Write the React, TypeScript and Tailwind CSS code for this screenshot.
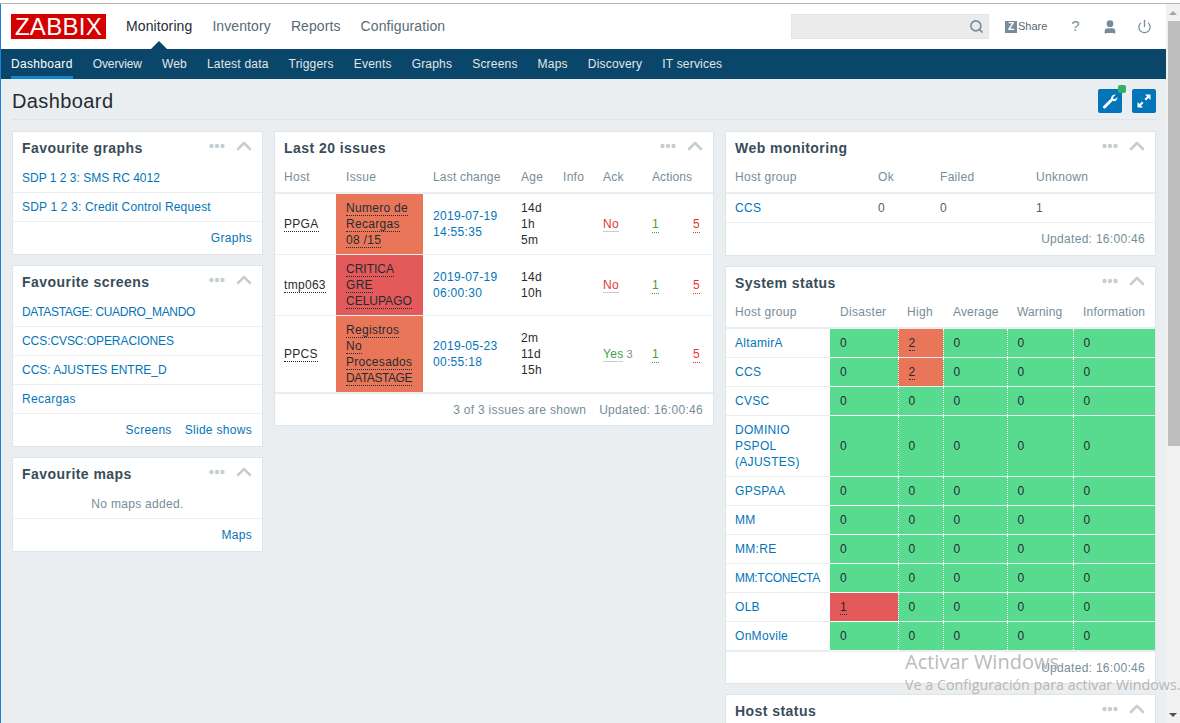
import React from "react";
import { Search, User, Power, ChevronUp } from "lucide-react";

const Link = "text-[#0275b8]";

function Head({ title }: { title: string }) {
  return (
    <div className="flex h-[31px] items-center pl-[9px] pr-[11px]">
      <div className="flex-1 pt-[2px] text-[14px] font-bold tracking-[0.45px] text-[#3a4c59]">{title}</div>
      <svg width="16" height="6" viewBox="0 0 16 6" className="mr-[12px] mb-[3px]">
        <circle cx="2.5" cy="3" r="2.2" fill="#c5ced3" />
        <circle cx="8" cy="3" r="2.2" fill="#c5ced3" />
        <circle cx="13.5" cy="3" r="2.2" fill="#c5ced3" />
      </svg>
      <ChevronUp size={24} strokeWidth={2.6} className="mb-[3px] -mx-[5px] text-[#c5ced3]" />
    </div>
  );
}

function Widget({ title, children, className = "" }: { title: string; children?: React.ReactNode; className?: string }) {
  return (
    <div className={`border border-[#dfe4e7] bg-white ${className}`}>
      <Head title={title} />
      {children}
    </div>
  );
}

function Foot({ children, short }: { children: React.ReactNode; short?: boolean }) {
  return <div className={`flex ${short ? "h-[32px]" : "h-[33px]"} items-center justify-end gap-[13px] border-t border-[#ebeef0] pr-[10px] text-[#768d99]`}>{children}</div>;
}

function ListRows({ items }: { items: [string, string][] }) {
  return (
    <div>
      {items.map(([t, track], i) => (
        <div key={t} className={`flex h-[29px] items-center px-[9px] ${Link} ${track} ${i ? "border-t border-[#ebeef0]" : ""}`}>{t}</div>
      ))}
    </div>
  );
}

function Dot({ children, className = "" }: { children: React.ReactNode; className?: string }) {
  return <span className={`border-b border-dotted border-current ${className}`}>{children}</span>;
}

const th = "h-[30px] pb-[2px] text-left align-middle font-normal text-[#768d99]";

function Issues() {
  const rows = [
    { host: "PPGA", color: "bg-[#e97659]", issue: [["Numero de", ""], ["Recargas", ""], ["08 /15", ""]], date: "2019-07-19", time: "14:55:35", age: ["14d", "1h", "5m"], ack: false },
    { host: "tmp063", color: "bg-[#e45959]", issue: [["CRITICA", "tracking-normal"], ["GRE", ""], ["CELUPAGO", "tracking-normal"]], date: "2019-07-19", time: "06:00:30", age: ["14d", "10h"], ack: false },
    { host: "PPCS", color: "bg-[#e97659]", issue: [["Registros", ""], ["No", ""], ["Procesados", ""], ["DATASTAGE", "tracking-[-0.45px]"]], date: "2019-05-23", time: "00:55:18", age: ["2m", "11d", "15h"], ack: true },
  ];
  return (
    <table className="w-full table-fixed border-collapse">
      <colgroup>
        <col className="w-[61px]" /><col className="w-[87px]" /><col className="w-[88px]" /><col className="w-[41px]" /><col className="w-[41px]" /><col className="w-[49px]" /><col />
      </colgroup>
      <thead>
        <tr className="border-b-2 border-[#ebeef0]">
          <th className={`${th} pl-[9px]`}>Host</th>
          <th className={`${th} pl-[10px]`}>Issue</th>
          <th className={`${th} pl-[10px] tracking-[0.2px]`}>Last change</th>
          <th className={`${th} pl-[10px]`}>Age</th>
          <th className={`${th} pl-[11px]`}>Info</th>
          <th className={`${th} pl-[10px]`}>Ack</th>
          <th className={`${th} pl-[10px] tracking-[0.1px]`}>Actions</th>
        </tr>
      </thead>
      <tbody className="leading-[16px]">
        {rows.map((r) => (
          <tr key={r.host} className="border-b border-[#ebeef0]">
            <td className="pl-[9px] text-[#1f2c33]"><Dot>{r.host}</Dot></td>
            <td className={`${r.color} py-[6px] pl-[10px] text-[#1f2c33]`}>
              {r.issue.map(([l, track]) => <div key={l}><Dot className={track}>{l}</Dot></div>)}
            </td>
            <td className={`pl-[10px] ${Link}`}><div>{r.date}</div><div>{r.time}</div></td>
            <td className="pl-[10px] text-[#1f2c33]">{r.age.map((a) => <div key={a}>{a}</div>)}</td>
            <td />
            <td className="pl-[10px] whitespace-nowrap">
              {r.ack ? (
                <><span className="border-b border-[#c5ced3] text-[#429e47]">Yes</span><span className="ml-[3px] text-[11px] text-[#768d99]">3</span></>
              ) : (
                <span className="border-b border-[#c5ced3] text-[#e33734]">No</span>
              )}
            </td>
            <td className="pl-[10px] pr-[13px]">
              <div className="flex justify-between">
                <Dot className="text-[#429e47]">1</Dot>
                <Dot className="text-[#e33734]">5</Dot>
              </div>
            </td>
          </tr>
        ))}
      </tbody>
    </table>
  );
}

function SystemStatus() {
  const names: [string, number?, number?][] = [
    ["AltamirA", 0, 2], ["CCS", 0, 2], ["CVSC"], ["DOMINIO PSPOL (AJUSTES)"], ["GPSPAA"], ["MM"], ["MM:RE"], ["MM:TCONECTA"], ["OLB", 1, 0], ["OnMovile"],
  ];
  const h = "h-[30px] pb-[1px] text-left align-middle font-normal text-[#768d99]";
  return (
    <table className="w-full table-fixed border-collapse">
      <colgroup>
        <col className="w-[104px]" /><col className="w-[68px]" /><col className="w-[45px]" /><col className="w-[64px]" /><col className="w-[66px]" /><col />
      </colgroup>
      <thead>
        <tr className="border-b-2 border-[#ebeef0]">
          <th className={`${h} pl-[9px]`}>Host group</th>
          <th className={`${h} pl-[10px]`}>Disaster</th>
          <th className={`${h} pl-[9px]`}>High</th>
          <th className={`${h} pl-[10px] tracking-[0.15px]`}>Average</th>
          <th className={`${h} pl-[10px] tracking-[0.15px]`}>Warning</th>
          <th className={`${h} pl-[10px] tracking-[0.2px]`}>Information</th>
        </tr>
      </thead>
      <tbody className="leading-[16px]">
        {names.map(([n, d = 0, high = 0]) => (
          <tr key={n} className="border-b border-[#ebeef0]">
            <td className={`py-[6px] pl-[9px] pr-[4px] ${Link} whitespace-normal`}>{n === "MM:TCONECTA" ? <span className="whitespace-nowrap tracking-[-0.32px]">{n}</span> : n}</td>
            <Cell v={d} hot="bg-[#e45959]" first />
            <Cell v={high} hot="bg-[#e97659]" />
            <Cell v={0} />
            <Cell v={0} />
            <Cell v={0} />
          </tr>
        ))}
      </tbody>
    </table>
  );
}

function Cell({ v, hot, first }: { v: number; hot?: string; first?: boolean }) {
  return (
    <td className={`h-[29px] border-b border-b-white pl-[10px] text-[#1f2c33] ${v ? hot : "bg-[#59db8f]"} ${first ? "" : "border-l border-dotted border-l-white"}`}>
      {v ? <Dot>{v}</Dot> : v}
    </td>
  );
}

export default function App() {
  return (
    <div className="relative h-[723px] w-[1180px] overflow-hidden bg-white text-[12px] tracking-[0.3px] [font-family:'Liberation_Sans',Arial,sans-serif]">
      <div className="h-[3px] bg-white" />
      <div className="h-px bg-[#b5b5b5]" />
      <div className="flex h-[719px]">
        <div className="w-px shrink-0 bg-[#1883d7]" />
        <main className="w-[1165px] shrink-0 overflow-hidden bg-[#ebeef0]">
          <header className="flex h-[45px] items-center bg-white pl-[10px] pr-[14px]">
            <div className="flex h-[25px] w-[95px] items-center justify-center bg-[#d40000] text-[24px] leading-none tracking-[0.3px] text-white">ZABBIX</div>
            <nav className="ml-[20px] flex gap-[20px] text-[14px] tracking-[0.1px] text-[#5a6a74]">
              <span className="text-[#1f2c33]">Monitoring</span>
              <span>Inventory</span>
              <span>Reports</span>
              <span>Configuration</span>
            </nav>
            <div className="ml-auto flex h-[25px] w-[198px] items-center justify-end border border-[#e3e4e4] bg-[#ebebeb] pr-[4px]">
              <Search size={15} strokeWidth={2.5} className="text-[#768d99]" />
            </div>
            <div className="ml-[16px] flex items-center">
              <span className="flex h-[12px] w-[12px] items-center justify-center bg-[#768d99] text-[10px] font-bold leading-none tracking-normal text-white">Z</span>
              <span className="ml-px text-[11px] tracking-normal text-[#5a6a74]">Share</span>
            </div>
            <span className="ml-[24px] text-[15px] text-[#768d99]">?</span>
            <User size={16} fill="#768d99" className="ml-[22px] text-[#768d99]" />
            <Power size={15} strokeWidth={2} className="ml-[19px] text-[#768d99]" />
          </header>
          <div className="relative flex h-[30px] items-stretch gap-[20px] bg-[#0a466a] pl-[10px] tracking-[0.2px] text-[#e1e6e9]">
            <span className="absolute -top-[8px] left-[150px] h-0 w-0 border-x-[8px] border-b-[8px] border-x-transparent border-b-[#0a466a]" />
            {["Dashboard", "Overview", "Web", "Latest data", "Triggers", "Events", "Graphs", "Screens", "Maps", "Discovery", "IT services"].map((t, i) => (
              <span key={t} className={`flex items-center border-b-[3px] pt-[3px] ${i === 0 ? "border-[#0e87cf] tracking-[0.33px] text-white" : i === 1 ? "border-transparent tracking-[-0.1px]" : "border-transparent"}`}>{t}</span>
            ))}
          </div>
          <div className="ml-[11px] mr-[10px] flex h-[41px] items-center border-b border-[#dfe4e7]">
            <h1 className="flex-1 pt-[3px] text-[20px] tracking-[0.4px] text-[#1f2c33]">Dashboard</h1>
            <div className="mt-[3px] flex gap-[10px]">
              <div className="relative flex h-[24px] w-[24px] items-center justify-center rounded-[2px] bg-[#0275b8]">
                <svg width="16" height="16" viewBox="0 0 16 16" fill="none">
                  <path d="M2.5 14 9 7.5" stroke="white" strokeWidth="3" strokeLinecap="round" />
                  <path d="M13.8 1.6 11 4.4l.6 1.4 1.4.5 2.4-2.4c.3 2.5-1.8 4.8-4.5 4.2L9 6.5C8.6 3.6 11 1.2 13.8 1.6Z" fill="white" />
                </svg>
                <span className="absolute -right-[4px] -top-[4px] h-[8px] w-[8px] rounded-[2px] bg-[#34af67]" />
              </div>
              <div className="flex h-[24px] w-[24px] items-center justify-center rounded-[2px] bg-[#0275b8]">
                <svg width="16" height="16" viewBox="0 0 16 16" fill="white">
                  <path d="M9 1.5h5.5V7l-2-2L10 7.5 8.5 6 11 3.5ZM7 14.5H1.5V9l2 2L6 8.5 7.5 10 5 12.5Z" />
                </svg>
              </div>
            </div>
          </div>
          <div className="mt-[11px] flex gap-[11px] pl-[11px]">
            <div className="flex w-[251px] shrink-0 flex-col gap-[10px]">
              <Widget title="Favourite graphs">
                <ListRows items={[["SDP 1 2 3: SMS RC 4012", "tracking-normal"], ["SDP 1 2 3: Credit Control Request", "tracking-[0.17px]"]]} />
                <Foot><span className={Link}>Graphs</span></Foot>
              </Widget>
              <Widget title="Favourite screens">
                <ListRows items={[["DATASTAGE: CUADRO_MANDO", "tracking-[-0.3px]"], ["CCS:CVSC:OPERACIONES", "tracking-[-0.07px]"], ["CCS: AJUSTES ENTRE_D", "tracking-normal"], ["Recargas", ""]]} />
                <Foot><span className={Link}>Screens</span><span className={Link}>Slide shows</span></Foot>
              </Widget>
              <Widget title="Favourite maps">
                <div className="flex h-[29px] items-center justify-center text-[#768d99]">No maps added.</div>
                <Foot><span className={Link}>Maps</span></Foot>
              </Widget>
            </div>
            <div className="w-[440px] shrink-0">
              <Widget title="Last 20 issues">
                <Issues />
                <Foot short><span>3 of 3 issues are shown</span><span>Updated: 16:00:46</span></Foot>
              </Widget>
            </div>
            <div className="flex w-[431px] shrink-0 flex-col gap-[10px]">
              <Widget title="Web monitoring">
                <table className="w-full table-fixed border-collapse">
                  <colgroup><col className="w-[142px]" /><col className="w-[62px]" /><col className="w-[96px]" /><col /></colgroup>
                  <thead>
                    <tr className="border-b-2 border-[#ebeef0]">
                      <th className={`${th} pl-[9px]`}>Host group</th>
                      <th className={`${th} pl-[10px]`}>Ok</th>
                      <th className={`${th} pl-[10px]`}>Failed</th>
                      <th className={`${th} pl-[10px]`}>Unknown</th>
                    </tr>
                  </thead>
                  <tbody>
                    <tr className="h-[29px] text-[#4f5f6a]">
                      <td className={`pl-[9px] ${Link}`}>CCS</td>
                      <td className="pl-[10px]">0</td>
                      <td className="pl-[10px]">0</td>
                      <td className="pl-[10px]">1</td>
                    </tr>
                  </tbody>
                </table>
                <Foot><span>Updated: 16:00:46</span></Foot>
              </Widget>
              <Widget title="System status">
                <SystemStatus />
                <Foot short><span>Updated: 16:00:46</span></Foot>
              </Widget>
              <Widget title="Host status" className="h-[100px] shrink-0" />
            </div>
          </div>
        </main>
        <div className="flex w-[14px] shrink-0 flex-col bg-[#f1f1f1]">
          <div className="flex h-[17px] items-center justify-center"><span className="h-0 w-0 border-x-[4px] border-b-[4px] border-x-transparent border-b-[#a3a3a3]" /></div>
          <div className="ml-[2px] h-[425px] bg-[#bdbdbd]" />
          <div className="flex-1" />
          <div className="flex h-[17px] items-center justify-center"><span className="h-0 w-0 border-x-[4px] border-t-[4px] border-x-transparent border-t-[#505050]" /></div>
        </div>
      </div>
      <div className="pointer-events-none absolute left-[905px] top-[650px] whitespace-nowrap tracking-normal text-[#a8a8a8]/80 [font-family:'Open_Sans',sans-serif]">
        <div className="text-[20px] leading-[24px]">Activar Windows</div>
        <div className="mt-[2px] text-[14.3px] leading-[18px]">Ve a Configuración para activar Windows.</div>
      </div>
    </div>
  );
}
